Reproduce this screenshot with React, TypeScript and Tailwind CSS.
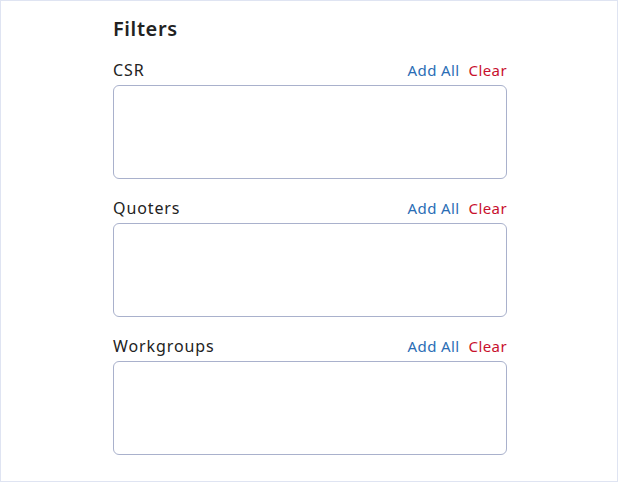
import React from "react";

const groups = ["CSR", "Quoters", "Workgroups"];

function FilterBox({ label }: { label: string }) {
  return (
    <div className="flex flex-col gap-1">
      <div className="flex items-center justify-between h-5 pb-[2px]">
        <span className="text-[16px] tracking-[0.9px] text-[#222]">{label}</span>
        <div className="flex gap-[9px] text-[15px] tracking-[0.4px]">
          <button className="text-[#2a6db5]">Add All</button>
          <button className="text-[#c8102e]">Clear</button>
        </div>
      </div>
      <div className="h-[94px] rounded-md border border-[#a9b1cc] bg-white" />
    </div>
  );
}

export default function App() {
  return (
    <div className="w-[618px] h-[482px] border border-[#dfe4f2] bg-white font-['Noto_Sans',sans-serif]">
      <div className="ml-[112px] w-[394px] pt-[14px] flex flex-col">
        <h2 className="text-[20px] leading-7 font-semibold tracking-[0.6px] text-[#222] mb-[18px]">Filters</h2>
        <div className="flex flex-col gap-5">
          {groups.map((g) => (
            <FilterBox key={g} label={g} />
          ))}
        </div>
      </div>
    </div>
  );
}
